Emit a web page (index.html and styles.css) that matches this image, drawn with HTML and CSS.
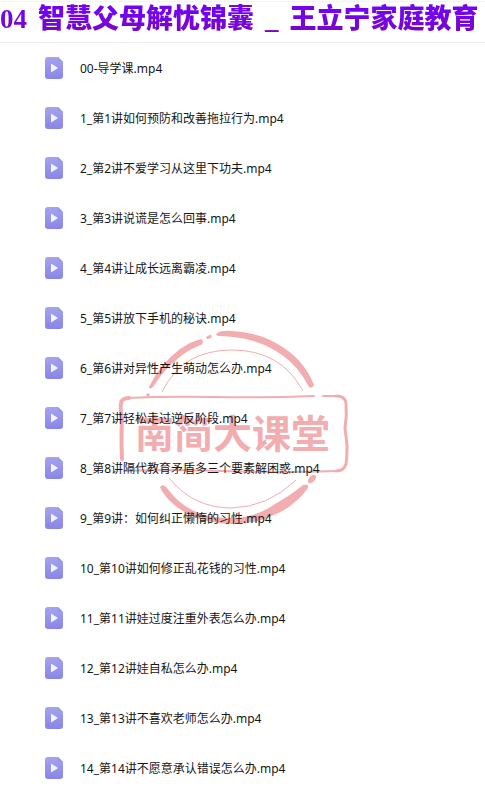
FILE: index.html
```html
<!DOCTYPE html>
<html lang="zh-CN">
<head>
    <meta charset="UTF-8">
    <meta name="viewport" content="width=device-width, initial-scale=1.0">
    <title>04 智慧父母解忧锦囊 _ 王立宁家庭教育</title>
    <link rel="stylesheet" href="styles.css">
</head>
<body>
    <!-- Shared file icon -->
    <svg class="icon-defs" aria-hidden="true">
        <defs>
            <linearGradient id="file-fill" x1="0" y1="0" x2="0" y2="1">
                <stop offset="0" stop-color="#a6a4ee"/>
                <stop offset="1" stop-color="#8785e6"/>
            </linearGradient>
            <symbol id="video-file" viewBox="0 0 20 22">
                <path d="M3 0H14L19 5V19Q19 22 16 22H4Q1 22 1 19V3Q1 0 4 0Z" fill="url(#file-fill)"/>
                <path d="M14 0V3Q14 5 16 5H19Z" fill="#9896e9"/>
                <path d="M7 7.4Q7 6.5 7.8 7L13.4 10.4Q14.2 11 13.4 11.6L7.8 15Q7 15.5 7 14.6Z" fill="#f6f5ff"/>
            </symbol>
        </defs>
    </svg>

    <header class="page-header">
        <h1 class="title">
            <span>04</span>
            <span>智慧父母解忧锦囊</span>
            <span>_</span>
            <span>王立宁家庭教育</span>
        </h1>
    </header>

    <main class="files">
        <!-- Stamp watermark -->
        <svg class="stamp" viewBox="0 0 245 205" aria-hidden="true">
            <g fill="currentColor">
                <path d="M39 62Q49 40 70 24Q82 16 91 14Q95 16 91 20Q80 24 71 31Q54 44 43 62Q39 65 39 62Z"/>
                <ellipse cx="99" cy="12" rx="3" ry="1.6" transform="rotate(-20 99 12)"/>
                <path d="M107 8Q112 5 122 6Q151 7 174 23Q195 37 204 60Q202 64 199 62Q188 41 172 30Q151 15 123 12Q113 11 108 11Q105 10 107 8Z"/>
                <circle cx="38" cy="70" r="1.7"/>
                <path d="M50 162Q53 158 57 163Q75 188 105 192Q140 197 165 179Q181 170 193 160Q199 158 198 163Q184 182 164 190Q140 202 109 198Q78 195 58 174Q52 167 50 162Z"/>
                <ellipse cx="202" cy="154" rx="5" ry="3" transform="rotate(-48 202 154)"/>
            </g>
            <g fill="none" stroke="currentColor">
                <path d="M52 67Q72 25 122 25Q171 25 193 66"/>
                <path d="M59 153Q83 183 122 183Q158 182 186 155"/>
            </g>
            <g fill="none" stroke="currentColor" stroke-linecap="round" stroke-linejoin="round">
                <path stroke-width="2" d="M15 73Q60 71 105 72T204 71M213 71H226"/>
                <path stroke-width="4" d="M12 134Q11 112 12 94Q10 82 11 78Q12 73 19 73"/>
                <path stroke-width="3" d="M226 71Q235 71 236 78Q237 91 235 103L237 120Q237 133 236 139Q234 146 226 146"/>
                <path stroke-width="2" d="M14 146Q63 144 112 146T226 146"/>
            </g>
            <text class="stamp-text" x="25" y="123">南简大课堂</text>
        </svg>

        <ul class="file-list">
            <li><a class="file" href="#"><svg class="file-icon"><use href="#video-file"/></svg>00-导学课.mp4</a></li>
            <li><a class="file" href="#"><svg class="file-icon"><use href="#video-file"/></svg>1_第1讲如何预防和改善拖拉行为.mp4</a></li>
            <li><a class="file" href="#"><svg class="file-icon"><use href="#video-file"/></svg>2_第2讲不爱学习从这里下功夫.mp4</a></li>
            <li><a class="file" href="#"><svg class="file-icon"><use href="#video-file"/></svg>3_第3讲说谎是怎么回事.mp4</a></li>
            <li><a class="file" href="#"><svg class="file-icon"><use href="#video-file"/></svg>4_第4讲让成长远离霸凌.mp4</a></li>
            <li><a class="file" href="#"><svg class="file-icon"><use href="#video-file"/></svg>5_第5讲放下手机的秘诀.mp4</a></li>
            <li><a class="file" href="#"><svg class="file-icon"><use href="#video-file"/></svg>6_第6讲对异性产生萌动怎么办.mp4</a></li>
            <li><a class="file" href="#"><svg class="file-icon"><use href="#video-file"/></svg>7_第7讲轻松走过逆反阶段.mp4</a></li>
            <li><a class="file" href="#"><svg class="file-icon"><use href="#video-file"/></svg>8_第8讲隔代教育矛盾多三个要素解困惑.mp4</a></li>
            <li><a class="file" href="#"><svg class="file-icon"><use href="#video-file"/></svg>9_第9讲：如何纠正懒惰的习性.mp4</a></li>
            <li><a class="file" href="#"><svg class="file-icon"><use href="#video-file"/></svg>10_第10讲如何修正乱花钱的习性.mp4</a></li>
            <li><a class="file" href="#"><svg class="file-icon"><use href="#video-file"/></svg>11_第11讲娃过度注重外表怎么办.mp4</a></li>
            <li><a class="file" href="#"><svg class="file-icon"><use href="#video-file"/></svg>12_第12讲娃自私怎么办.mp4</a></li>
            <li><a class="file" href="#"><svg class="file-icon"><use href="#video-file"/></svg>13_第13讲不喜欢老师怎么办.mp4</a></li>
            <li><a class="file" href="#"><svg class="file-icon"><use href="#video-file"/></svg>14_第14讲不愿意承认错误怎么办.mp4</a></li>
        </ul>
    </main>
</body>
</html>
```

FILE: styles.css
```css
* {
    box-sizing: border-box;
}

body {
    margin: 0;
    background: #fff;
    color: #161616;
    font-family: "Noto Sans", "Noto Sans CJK SC", sans-serif;
    font-size: 12px;
}

.icon-defs {
    position: absolute;
    width: 0;
    height: 0;
}

/* Title bar */
.page-header {
    margin-top: 1px;
    border-top: 1px solid #f3f3f3;
    border-bottom: 1px solid #eee;
}

.title {
    display: flex;
    gap: 11px;
    margin: 0;
    font-family: "Liberation Serif", "Noto Sans CJK SC", serif;
    font-size: 27px;
    font-weight: 900;
    line-height: 34px;
    padding-bottom: 6px;
    white-space: nowrap;
    color: transparent;
    background: linear-gradient(#7404ee 30%, #7a08b8 85%);
    background-clip: text;
    -webkit-background-clip: text;
}

/* File list */
.files {
    position: relative;
    padding: 14px 44px 0;
}

.file-list {
    display: flex;
    flex-direction: column;
    gap: 28px;
    margin: 0;
    padding: 0;
    list-style: none;
    position: relative;
}

.file {
    display: flex;
    align-items: center;
    gap: 16px;
    height: 22px;
    color: inherit;
    text-decoration: none;
    white-space: nowrap;
}

.file-icon {
    width: 20px;
    height: 22px;
    flex: none;
}

/* Stamp lies under the file names */
.stamp {
    position: absolute;
    left: 110px;
    top: 282px;
    width: 245px;
    height: 205px;
    color: #f2adb0;
}

.stamp-text {
    fill: currentColor;
    font-family: "Noto Sans CJK SC", sans-serif;
    font-size: 39px;
    font-weight: 700;
}
```
